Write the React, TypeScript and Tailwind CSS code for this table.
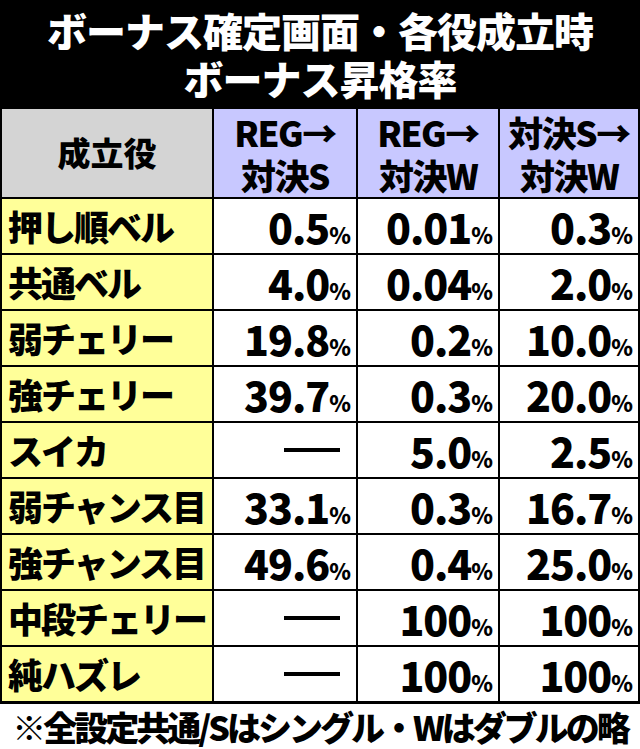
import React from "react";

type Row = {
  name: string;
  values: (string | null)[];
};

const rows: Row[] = [
  { name: "押し順ベル", values: ["0.5", "0.01", "0.3"] },
  { name: "共通ベル", values: ["4.0", "0.04", "2.0"] },
  { name: "弱チェリー", values: ["19.8", "0.2", "10.0"] },
  { name: "強チェリー", values: ["39.7", "0.3", "20.0"] },
  { name: "スイカ", values: [null, "5.0", "2.5"] },
  { name: "弱チャンス目", values: ["33.1", "0.3", "16.7"] },
  { name: "強チャンス目", values: ["49.6", "0.4", "25.0"] },
  { name: "中段チェリー", values: [null, "100", "100"] },
  { name: "純ハズレ", values: [null, "100", "100"] },
];

const font = { fontFamily: '"Noto Sans CJK JP", "Noto Sans", sans-serif' };

const ValueCell = ({ value }: { value: string | null }) => (
  <div className="bg-white h-[54px] flex items-center justify-end pr-[6px]">
    {value === null ? (
      <div className="w-[56px] h-[4px] bg-black mr-[10px]" />
    ) : (
      <span className="font-black text-black leading-none tracking-[-1px]">
        <span className="text-[41px]">{value}</span>
        <span className="text-[22px]">%</span>
      </span>
    )}
  </div>
);

const App = () => {
  return (
    <div className="w-[640px] h-[749px] bg-white overflow-hidden" style={font}>
      <div className="h-[108px] bg-black flex flex-col items-center justify-center gap-[8px] text-white font-black text-[40px] leading-none tracking-[-1px]">
        <div>ボーナス確定画面・各役成立時</div>
        <div>ボーナス昇格率</div>
      </div>

      <div className="grid grid-cols-[210px_142px_140px_1fr] gap-[2px] bg-black px-[2px] pt-[1px] pb-[3px]">
        <div className="bg-[#d4d4d4] h-[88px] flex items-center justify-center text-[33px] font-black">
          成立役
        </div>
        {["REG→|対決S", "REG→|対決W", "対決S→|対決W"].map((h, i) => (
          <div
            key={i}
            className="bg-[#c8c8ff] h-[88px] flex flex-col items-center justify-center gap-[8px] text-[35px] font-black leading-none tracking-[-1.5px] whitespace-nowrap"
          >
            <div>{h.split("|")[0]}</div>
            <div>{h.split("|")[1]}</div>
          </div>
        ))}

        {rows.map((row, i) => (
          <React.Fragment key={i}>
            <div className="bg-[#ffff99] h-[54px] flex items-center pl-[6px] text-[35px] font-black tracking-[-2px] whitespace-nowrap">
              {row.name}
            </div>
            {row.values.map((v, j) => (
              <ValueCell key={j} value={v} />
            ))}
          </React.Fragment>
        ))}
      </div>

      <div className="h-[45px] flex items-center justify-center text-[34px] font-black leading-none tracking-[-3px] whitespace-nowrap">
        ※全設定共通/Sはシングル・Wはダブルの略
      </div>
    </div>
  );
};

export default App;
